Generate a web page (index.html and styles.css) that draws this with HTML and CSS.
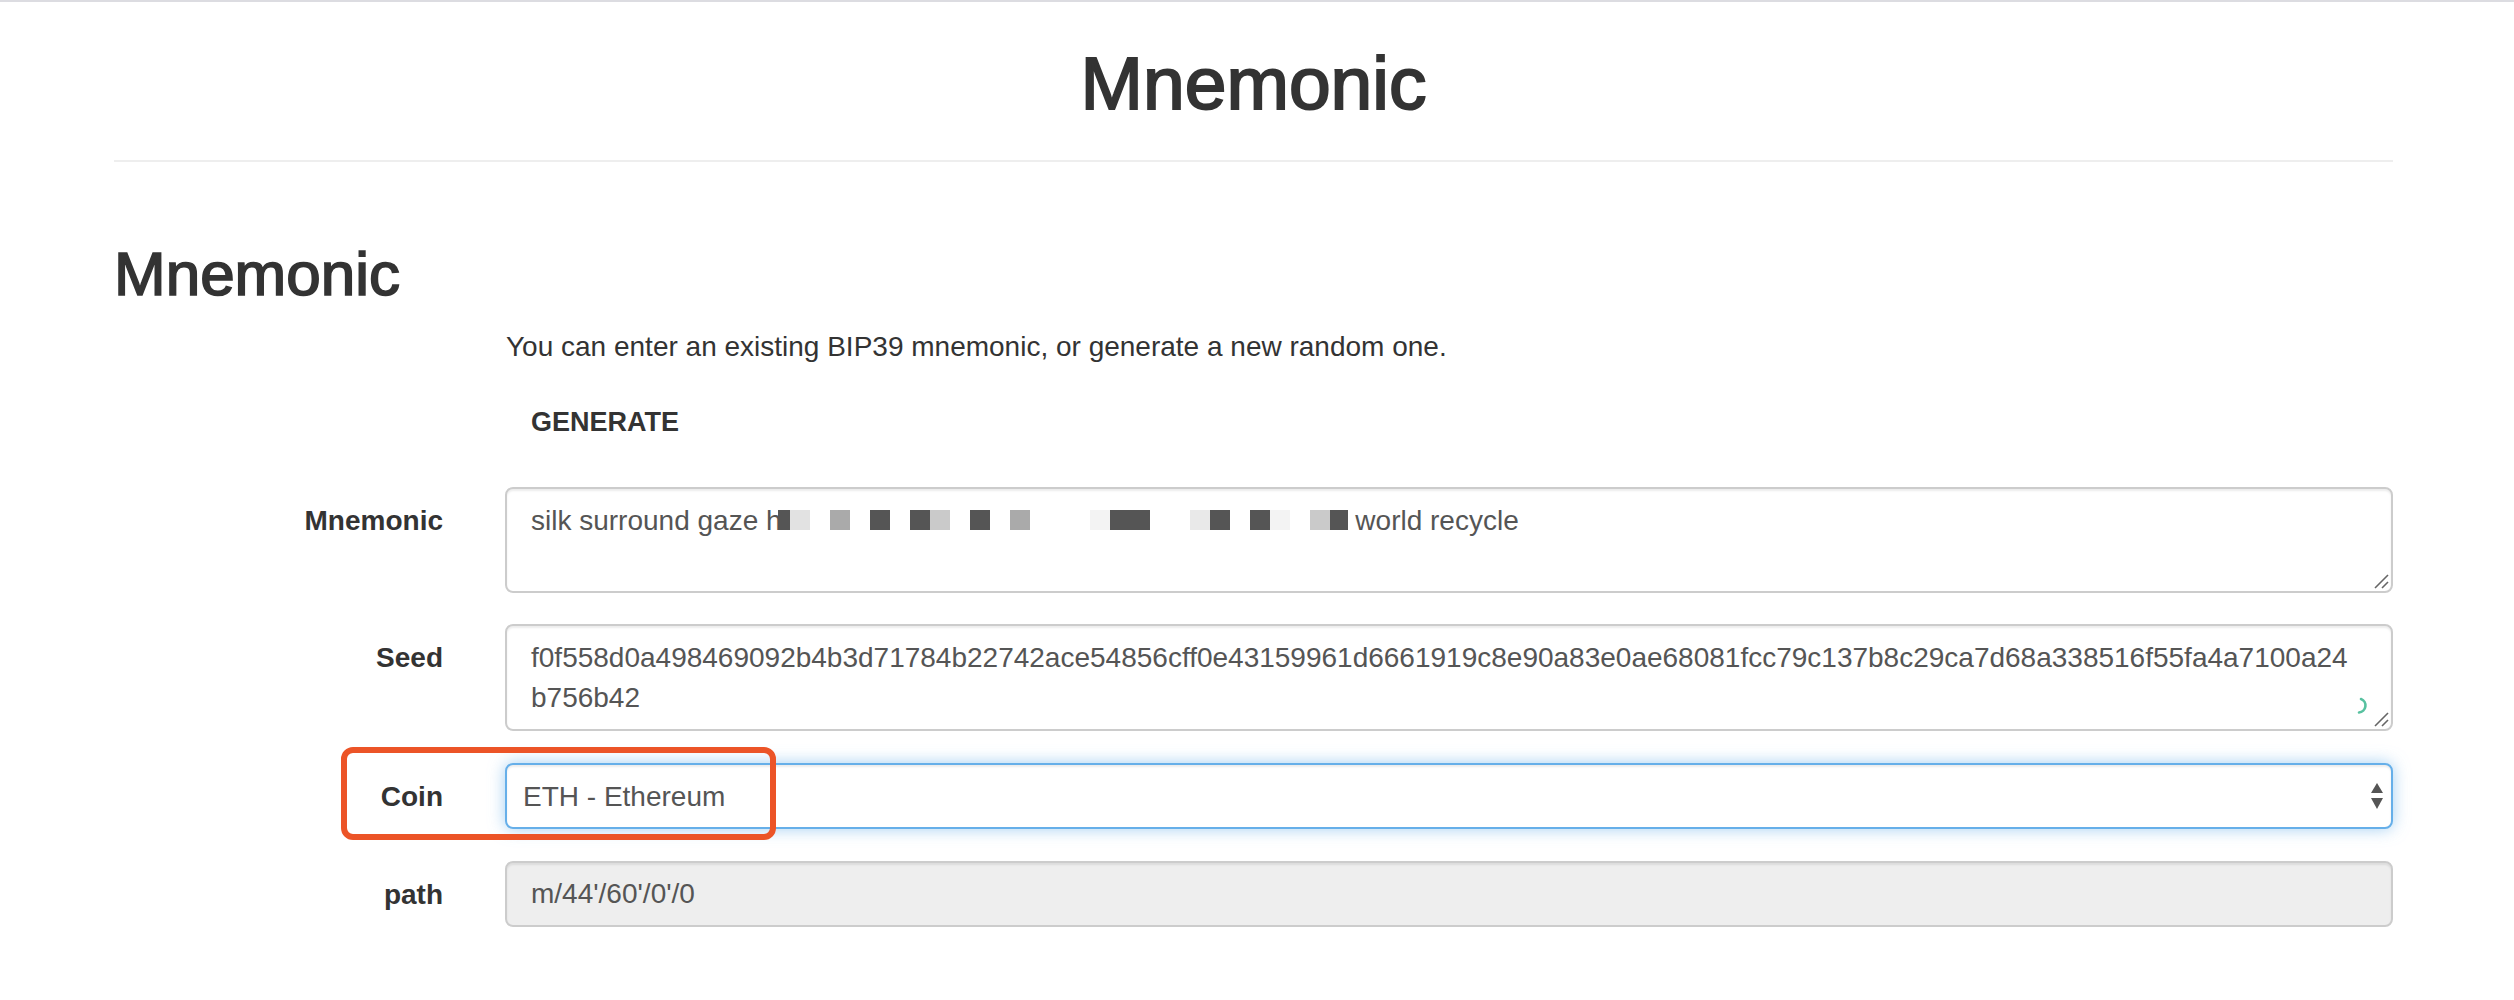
FILE: index.html
```html
<!DOCTYPE html>
<html>
<head>
<meta charset="utf-8">
<title>Mnemonic</title>
<link rel="stylesheet" href="styles.css">
</head>
<body>
<div class="container">
  <div class="page-header">
    <h1 class="title">Mnemonic</h1>
  </div>
  <h2 class="section-title">Mnemonic</h2>
  <div class="form">
    <div class="row row-desc">
      <div class="label"></div>
      <p class="help">You can enter an existing BIP39 mnemonic, or generate a new random one.</p>
    </div>
    <div class="row row-generate">
      <div class="label"></div>
      <div><button class="btn-generate" type="button">GENERATE</button></div>
    </div>
    <div class="row row-mnemonic">
      <label class="label">Mnemonic</label>
      <div class="control area area-mnemonic">silk surround gaze h<span class="px px-first c-d"></span><span class="px c-l1"></span><span class="px c-w"></span><span class="px c-g"></span><span class="px c-w"></span><span class="px c-d"></span><span class="px c-w"></span><span class="px c-d"></span><span class="px c-l2"></span><span class="px c-w"></span><span class="px c-d"></span><span class="px c-w"></span><span class="px c-g"></span><span class="px px-3 c-w"></span><span class="px c-l3"></span><span class="px px-2 c-d"></span><span class="px px-2 c-w"></span><span class="px c-l4"></span><span class="px c-d"></span><span class="px c-w"></span><span class="px c-d"></span><span class="px c-l3"></span><span class="px c-w"></span><span class="px c-l2"></span><span class="px px-last c-d"></span> world recycle<svg class="grip" width="16" height="16" viewBox="0 0 16 16"><line x1="2" y1="15" x2="15" y2="2"/><line x1="9" y1="15" x2="15" y2="9"/></svg></div>
    </div>
    <div class="row row-seed">
      <label class="label">Seed</label>
      <div class="control area area-seed">f0f558d0a498469092b4b3d71784b22742ace54856cff0e43159961d6661919c8e90a83e0ae68081fcc79c137b8c29ca7d68a338516f55fa4a7100a24<br>b756b42<svg class="spinner" width="16" height="18" viewBox="0 0 16 18"><path d="M6 2 A7 7 0 0 1 4 15.5"/></svg><svg class="grip" width="16" height="16" viewBox="0 0 16 16"><line x1="2" y1="15" x2="15" y2="2"/><line x1="9" y1="15" x2="15" y2="9"/></svg></div>
    </div>
    <div class="row row-coin">
      <label class="label">Coin</label>
      <div class="select-wrap">
        <select class="control select">
          <option>ETH - Ethereum</option>
        </select>
        <svg class="arrows" width="12" height="26" viewBox="0 0 12 26"><polygon points="0,10 6,0 12,10"/><polygon points="0,15 12,15 6,26"/></svg>
      </div>
      <div class="annotation"></div>
    </div>
    <div class="row row-path">
      <label class="label">path</label>
      <input class="control input" type="text" readonly value="m/44'/60'/0'/0">
    </div>
  </div>
</div>
</body>
</html>
```
FILE: styles.css
```css
html, body {
  background: #fff;
}
body {
  margin: 0;
  border-top: 2px solid #dcdce1;
  font-family: "Liberation Sans", Arial, Helvetica, sans-serif;
  font-size: 28px;
  line-height: 40px;
  color: #333;
}
.container {
  width: 2279px;
  margin-left: 114px;
}
.page-header {
  padding: 40px 0 36px;
  border-bottom: 2px solid #eee;
  text-align: center;
}
.title {
  margin: 0;
  font-size: 75px;
  line-height: 82px;
  font-weight: normal;
  -webkit-text-stroke: 2px #333;
}
.section-title {
  margin: 78px 0 0;
  font-size: 62px;
  line-height: 68px;
  font-weight: normal;
  -webkit-text-stroke: 1.7px #333;
}
.row {
  display: grid;
  grid-template-columns: 329px 1888px;
  column-gap: 62px;
  position: relative;
}
.row-desc { margin-top: 19px; }
.row-generate { margin-top: 35px; }
.row-mnemonic { margin-top: 45px; }
.row-seed { margin-top: 31px; }
.row-coin { margin-top: 32px; }
.row-path { margin-top: 32px; }
.label {
  display: block;
  text-align: right;
  font-weight: bold;
  padding-top: 14px;
  color: #333;
}
.help {
  margin: 0;
  padding-left: 1px;
}
.btn-generate {
  font-family: "Liberation Sans", Arial, sans-serif;
  font-size: 27px;
  line-height: 40px;
  font-weight: bold;
  color: #333;
  background: transparent;
  border: 0;
  padding: 0 0 0 26px;
  margin: 0;
  display: block;
}
.control {
  box-sizing: border-box;
  border: 2px solid #ccc;
  border-radius: 8px;
  background: #fff;
  color: #555;
  font-family: "Liberation Sans", Arial, sans-serif;
  font-size: 28px;
  box-shadow: inset 0 2px 2px rgba(0,0,0,.075);
}
.area {
  position: relative;
  padding: 12px 24px;
  line-height: 40px;
  white-space: nowrap;
}
.area-mnemonic { height: 106px; }
.area-seed { height: 107px; }
.px {
  display: inline-block;
  width: 20px;
  height: 20px;
  vertical-align: baseline;
}
.px-first { width: 12px; margin-left: -4px; }
.px-last { width: 18px; }
.px-2 { width: 40px; }
.px-3 { width: 60px; }
.c-d { background: #555; }
.c-w { background: #fff; }
.c-g { background: #aaa; }
.c-l1 { background: #e2e2e2; }
.c-l2 { background: #cacaca; }
.c-l3 { background: #f3f3f3; }
.c-l4 { background: #e9e9e9; }
.grip {
  position: absolute;
  right: 2px;
  bottom: 2px;
  stroke: #666;
  stroke-width: 1.6;
}
.spinner {
  position: absolute;
  right: 20px;
  bottom: 14px;
  fill: none;
  stroke: #58c1a0;
  stroke-width: 2.6;
  stroke-linecap: round;
}
.select-wrap {
  position: relative;
}
.select {
  display: block;
  width: 100%;
  height: 66px;
  padding: 0 16px;
  border-color: #66afe9;
  outline: 0;
  -webkit-appearance: none;
  appearance: none;
  box-shadow: inset 0 2px 2px rgba(0,0,0,.075), 0 0 16px rgba(102,175,233,.6);
}
.arrows {
  position: absolute;
  right: 10px;
  top: 20px;
  fill: #555;
}
.annotation {
  position: absolute;
  left: 227px;
  top: -16px;
  width: 435px;
  height: 93px;
  box-sizing: border-box;
  border: 6px solid #ec5427;
  border-radius: 12px;
  pointer-events: none;
}
.input {
  display: block;
  width: 100%;
  height: 66px;
  padding: 0 24px;
  background: #eee;
  outline: 0;
  margin: 0;
}
```
